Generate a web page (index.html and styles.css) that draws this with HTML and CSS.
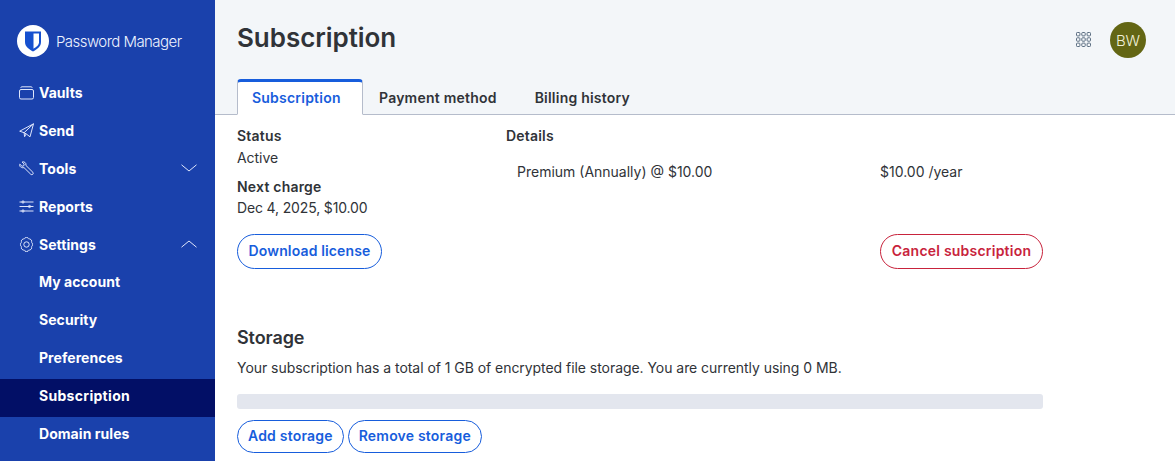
FILE: index.html
```html
<!DOCTYPE html>
<html lang="en">
<head>
<meta charset="utf-8">
<title>Subscription</title>
<link rel="stylesheet" href="styles.css">
</head>
<body>
<div class="app">
  <aside class="sidebar">
    <div class="brand">
      <span class="brand-mark">
        <svg viewBox="0 0 32 32" width="32" height="32"><circle cx="16" cy="16" r="16" fill="#fff"/><path d="M8 6.500h16v10.500c0 4.600-4.200 7.500-8 9.500-3.800-2-8-4.900-8-9.500z" fill="#1650cf"/><path d="M16.500 8.500h5.500v8.800c0 2.900-3 5-5.500 6.400z" fill="#fff"/></svg>
      </span>
      <span class="brand-name">Password Manager</span>
    </div>
    <nav class="nav">
      <a class="nav-item"><svg class="nav-icon" viewBox="0 0 15 15"><rect x=".5" y="4.500" width="14" height="9.500" rx="1.500"/><path d="M1.800 2.800c0-.6.400-1 1-1h9.400c.6 0 1 .4 1 1"/></svg>Vaults</a>
      <a class="nav-item"><svg class="nav-icon" viewBox="0 0 15 15"><path d="M14.500.8.700 8.200l4.400 1.500L14.500.8 11 13.800 7.200 10.900 5.100 9.700l.5 4 1.600-2.800"/></svg>Send</a>
      <a class="nav-item"><svg class="nav-icon" viewBox="0 0 15 15"><path d="M.8 3.200 3 5.300l1.700-.4.500-1.800L3.100 1c1.900-.8 4.500.8 3.800 3.400l7 6.900c1.200 1.300-.8 3.300-2.100 2L5 6.600C2.500 7.300 0 5.500.8 3.200z"/></svg>Tools<svg class="chev" viewBox="0 0 16 8"><path d="M.5.800 8 7 15.500.8"/></svg></a>
      <a class="nav-item"><svg class="nav-icon" viewBox="0 0 15 15"><path d="M.5 3h14M.5 7.500h14M.5 12h14"/><circle cx="4" cy="3" r="1.100"/><circle cx="10.500" cy="7.500" r="1.100"/><circle cx="4" cy="12" r="1.100"/></svg>Reports</a>
      <a class="nav-item"><svg class="nav-icon" viewBox="0 0 15 15"><path d="M6 .8c.9-.5 2.100-.5 3 0 .2.900.8 1.400 1.800 1.100.8.300 1.600 1.100 2 2-.4.900-.3 1.700.5 2.300.3.900.3 1.700 0 2.600-.8.600-.9 1.400-.5 2.300-.4.900-1.200 1.700-2 2-1-.3-1.600.2-1.800 1.100-.9.500-2.100.5-3 0-.2-.9-.8-1.400-1.800-1.100-.8-.3-1.600-1.100-2-2 .4-.9.300-1.700-.5-2.300-.3-.9-.3-1.700 0-2.600.8-.6.9-1.400.5-2.300.4-.9 1.200-1.700 2-2 1 .3 1.600-.2 1.800-1.100z"/><circle cx="7.500" cy="7.500" r="2.700"/></svg>Settings<svg class="chev" viewBox="0 0 16 8"><path d="M.5 7.200 8 1l7.500 6.200"/></svg></a>
      <a class="nav-item sub">My account</a>
      <a class="nav-item sub">Security</a>
      <a class="nav-item sub">Preferences</a>
      <a class="nav-item sub current">Subscription</a>
      <a class="nav-item sub">Domain rules</a>
    </nav>
  </aside>
  <main class="main">
    <header class="topbar">
      <h1 class="title">Subscription</h1>
      <div class="top-actions">
        <svg class="apps" viewBox="0 0 15 15"><g><rect x="0.500" y="0.500" width="3.400" height="3.400" rx=".8"/><rect x="5.800" y="0.500" width="3.400" height="3.400" rx=".8"/><rect x="11.100" y="0.500" width="3.400" height="3.400" rx=".8"/><rect x="0.500" y="5.800" width="3.400" height="3.400" rx=".8"/><rect x="5.800" y="5.800" width="3.400" height="3.400" rx=".8"/><rect x="11.100" y="5.800" width="3.400" height="3.400" rx=".8"/><rect x="0.500" y="11.100" width="3.400" height="3.400" rx=".8"/><rect x="5.800" y="11.100" width="3.400" height="3.400" rx=".8"/><rect x="11.100" y="11.100" width="3.400" height="3.400" rx=".8"/></g></svg>
        <span class="avatar">BW</span>
      </div>
    </header>
    <div class="tabs">
      <a class="tab active">Subscription</a>
      <a class="tab">Payment method</a>
      <a class="tab">Billing history</a>
    </div>
    <section class="panel">
      <div class="summary">
        <div class="facts">
          <div class="label">Status</div>
          <div class="value">Active</div>
          <div class="label next">Next charge</div>
          <div class="value date">Dec 4, 2025, $10.00</div>
          <button class="btn license">Download license</button>
        </div>
        <div class="details">
          <div class="label">Details</div>
          <div class="line">
            <span class="line-name">Premium (Annually) @ $10.00</span>
            <span class="line-price">$10.00 /year</span>
          </div>
          <div class="cancel-row"><button class="btn danger">Cancel subscription</button></div>
        </div>
      </div>
      <h2 class="storage-title">Storage</h2>
      <p class="storage-text">Your subscription has a total of 1 GB of encrypted file storage. You are currently using 0 MB.</p>
      <div class="bar"></div>
      <div class="storage-actions">
        <button class="btn small">Add storage</button>
        <button class="btn small">Remove storage</button>
      </div>
    </section>
  </main>
</div>
</body>
</html>
```
FILE: styles.css
```css
* { box-sizing: border-box; }
html, body { margin: 0; height: 461px; overflow: hidden; }
body { font-family: "Inter", "Liberation Sans", sans-serif; font-size: 14px; color: #303338; background: #fff; }
.app { display: flex; height: 461px; overflow: hidden; }

.sidebar { width: 215px; flex: none; background: #1a41ac; color: #fff; }
.brand { display: flex; align-items: center; gap: 7px; height: 73px; padding: 9px 0 0 17px; }
.brand-mark { display: flex; width: 32px; height: 32px; }
.brand-name { font-size: 15px; font-weight: 300; letter-spacing: -.55px; color: #eef3ff; }
.nav { display: flex; flex-direction: column; }
.nav-item { display: flex; align-items: center; height: 38px; padding: 0 18px 0 19px; font-size: 14px; font-weight: 700; letter-spacing: .05px; color: #fff; }
.nav-item.sub { padding: 0 18px 6px 39px; }
.nav-item:nth-child(6) { margin-top: 2px; }
.nav-item.current { background: #020f66; letter-spacing: .3px; }
.nav-icon { width: 15px; height: 15px; margin-right: 5px; fill: none; stroke: #dfe6fb; stroke-width: 1; flex: none; }
.chev { width: 16px; height: 8px; margin-left: auto; fill: none; stroke: #dfe6fb; stroke-width: 1; }

.main { flex: 1; min-width: 0; background: #fff; }
.topbar { display: flex; align-items: center; justify-content: space-between; height: 79px; padding: 0 29px 5px 22px; background: #f3f6f9; }
.title { margin: 0; font-size: 26px; font-weight: 600; letter-spacing: -.05px; color: #303338; }
.top-actions { display: flex; align-items: center; gap: 19px; margin-top: 6px; }
.apps { width: 15px; height: 15px; margin-bottom: 2px; fill: none; stroke: #5a6d81; stroke-width: 1; }
.avatar { display: flex; align-items: center; justify-content: center; width: 36px; height: 36px; border-radius: 50%; background: #636614; color: #f1f1d8; font-size: 15px; font-weight: 300; }

.tabs { display: flex; height: 36px; padding-left: 22px; background: #f3f6f9; border-bottom: 1px solid #b5bccb; }
.tab { display: flex; align-items: center; height: 36px; padding: 0 21px 2px 15px; border: 1px solid transparent; border-top-width: 3px; font-weight: 600; letter-spacing: .22px; color: #303338; }
.tab.active { width: 126px; padding: 0 0 2px 14px; background: #fff; color: #175ddc; border-color: #175ddc #b5bccb #fff; border-radius: 4px 4px 0 0; }

.panel { width: 828px; padding: 0 0 0 22px; }
.summary { display: flex; }
.facts { width: 269px; flex: none; padding-top: 11px; }
.details { flex: 1; padding-top: 11px; }
.label { height: 20px; line-height: 20px; font-weight: 600; letter-spacing: .2px; }
.value { height: 20px; margin-top: 2px; line-height: 20px; font-weight: 400; letter-spacing: -.05px; }
.label.next { margin-top: 9px; }
.value.date { margin-top: 1px; letter-spacing: -.15px; }
.line { display: flex; margin-top: 16px; padding-left: 11px; height: 20px; line-height: 20px; }
.line-name { width: 363px; flex: none; }
.cancel-row { display: flex; margin-top: 52px; padding-left: 374px; }
.btn { height: 35px; padding: 0 10px 2px; border: 1px solid #175ddc; border-radius: 18px; background: #fff; color: #175ddc; font: 600 14px "Inter", "Liberation Sans", sans-serif; letter-spacing: .2px; white-space: nowrap; }
.btn.license { display: block; margin-top: 16px; width: 145px; letter-spacing: .14px; }
.btn.danger { width: 163px; color: #c8233c; border-color: #c8233c; letter-spacing: .22px; }
.storage-title { margin: 58px 0 0; font-size: 18px; line-height: 22px; font-weight: 600; letter-spacing: -.1px; }
.storage-text { margin: 9px 0 0; line-height: 20px; letter-spacing: -.05px; }
.bar { height: 15px; margin-top: 16px; border-radius: 3px; background: #e3e6ee; }
.storage-actions { display: flex; gap: 4px; margin-top: 11px; }
.btn.small { height: 33px; }
```
